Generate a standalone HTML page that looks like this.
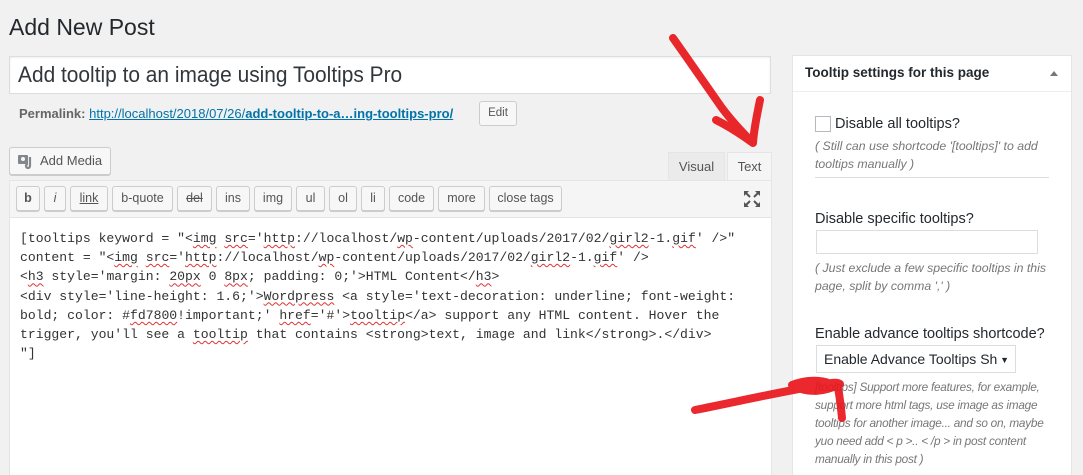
<!DOCTYPE html>
<html style="width:1083px;height:475px;overflow:hidden"><head><meta charset="utf-8"><style>
*{box-sizing:border-box;margin:0;padding:0}
body{width:1083px;height:475px;background:#f1f1f1;font-family:"Liberation Sans",sans-serif;color:#23282d;position:relative;overflow:hidden}
.a{position:absolute}
.btn{position:absolute;top:186px;height:25px;border:1px solid #ccc;background:#f7f7f7;border-radius:3px;box-shadow:0 1px 0 #ccc;font-size:12.5px;color:#555;text-align:center;line-height:23px}
.code{font-family:"Liberation Mono",monospace;font-size:13.1px;color:#333;line-height:19.2px;white-space:pre}
.sq{text-decoration:underline wavy #d33;text-decoration-thickness:1px;text-underline-offset:2px}
.note{font-style:italic;color:#777;font-size:12.3px;line-height:18px}
.lbl{font-size:14.5px;color:#23282d}
</style></head><body>
<div class="a" style="left:9px;top:14px;font-size:23px;color:#23282d">Add New Post</div>
<div class="a" style="left:9px;top:56px;width:762px;height:38px;background:#fff;border:1px solid #ddd;box-shadow:inset 0 1px 2px rgba(0,0,0,.07)"></div>
<div class="a" style="left:18px;top:62px;font-size:22px;color:#32373c;transform:scaleX(.95);transform-origin:left">Add tooltip to an image using Tooltips Pro</div>
<div class="a" style="left:19px;top:106px;font-size:13px;color:#666;white-space:nowrap"><b>Permalink:</b> <span style="color:#0073aa;text-decoration:underline">http://localhost/2018/07/26/<b>add-tooltip-to-a…ing-tooltips-pro/</b></span></div>
<div class="a" style="left:479px;top:101px;width:38px;height:25px;border:1px solid #ccc;background:#f7f7f7;border-radius:3px;font-size:11.5px;color:#555;text-align:center;line-height:23px">Edit</div>
<div class="a" style="left:9px;top:147px;width:102px;height:28px;border:1px solid #ccc;background:#f7f7f7;border-radius:3px;box-shadow:0 1px 0 #ccc;font-size:13px;color:#555;line-height:26px;padding-left:30px">Add Media</div>
<svg class="a" style="left:17px;top:153px" width="18" height="17" viewBox="0 0 18 17"><rect x="1" y="2" width="10" height="9" rx="1" fill="#82878c"/><circle cx="6" cy="6" r="2" fill="#f7f7f7"/><path d="M13 4v9a2 2 0 1 1-2-2" stroke="#82878c" stroke-width="2.2" fill="none"/></svg>
<div class="a" style="left:668px;top:152px;width:57px;height:29px;background:#ebebeb;border:1px solid #e5e5e5;border-bottom:none;font-size:13px;color:#555;text-align:center;line-height:28px">Visual</div>
<div class="a" style="left:727px;top:152px;width:45px;height:30px;background:#f5f5f5;border:1px solid #e5e5e5;border-bottom:none;font-size:13px;color:#555;text-align:center;line-height:28px">Text</div>
<div class="a" style="left:9px;top:180px;width:763px;height:38px;background:#f5f5f5;border:1px solid #e5e5e5"></div>
<div class="btn" style="left:16px;width:24px;font-weight:bold">b</div>
<div class="btn" style="left:44px;width:22px;font-style:italic">i</div>
<div class="btn" style="left:70px;width:38px;text-decoration:underline">link</div>
<div class="btn" style="left:112px;width:61px">b-quote</div>
<div class="btn" style="left:177px;width:35px;text-decoration:line-through">del</div>
<div class="btn" style="left:216px;width:34px">ins</div>
<div class="btn" style="left:254px;width:38px">img</div>
<div class="btn" style="left:296px;width:29px">ul</div>
<div class="btn" style="left:329px;width:28px">ol</div>
<div class="btn" style="left:361px;width:24px">li</div>
<div class="btn" style="left:389px;width:45px">code</div>
<div class="btn" style="left:438px;width:47px">more</div>
<div class="btn" style="left:489px;width:73px">close tags</div>
<svg class="a" style="left:743px;top:190px" width="18" height="18" viewBox="0 0 18 18" fill="#555"><path d="M1 1h5L1 6zM17 1h-5l5 5zM1 17h5l-5-5zM17 17h-5l5-5z"/><path d="M3 3l4 4M15 3l-4 4M3 15l4-4M15 15l-4-4" stroke="#555" stroke-width="2"/></svg>
<div class="a" style="left:9px;top:217px;width:763px;height:270px;background:#fff;border:1px solid #e5e5e5"></div>
<div class="a code" style="left:20px;top:229px">[tooltips keyword = "&lt;<span class="sq">img</span> <span class="sq">src</span>='<span class="sq">http</span>://localhost/<span class="sq">wp</span>-content/uploads/2017/02/<span class="sq">girl2</span>-1.<span class="sq">gif</span>' /&gt;"
content = "&lt;<span class="sq">img</span> <span class="sq">src</span>='<span class="sq">http</span>://localhost/<span class="sq">wp</span>-content/uploads/2017/02/<span class="sq">girl2</span>-1.<span class="sq">gif</span>' /&gt;
&lt;<span class="sq">h3</span> style='margin: <span class="sq">20px</span> 0 <span class="sq">8px</span>; padding: 0;'&gt;HTML Content&lt;/<span class="sq">h3</span>&gt;
&lt;div style='line-height: 1.6;'&gt;<span class="sq">Wordpress</span> &lt;a style='text-decoration: underline; font-weight:
bold; color: #<span class="sq">fd7800</span>!important;' <span class="sq">href</span>='#'&gt;<span class="sq">tooltip</span>&lt;/a&gt; support any HTML content. Hover the
trigger, you'll see a <span class="sq">tooltip</span> that contains &lt;strong&gt;text, image and link&lt;/strong&gt;.&lt;/div&gt;
"]</div>

<div class="a" style="left:792px;top:55px;width:280px;height:440px;background:#fff;border:1px solid #e5e5e5"></div>
<div class="a" style="left:793px;top:91px;width:278px;height:1px;background:#eee"></div>
<div class="a" style="left:805px;top:65px;font-size:13.5px;font-weight:bold;color:#23282d">Tooltip settings for this page</div>
<div class="a" style="left:1050px;top:71px;width:0;height:0;border-left:4px solid transparent;border-right:4px solid transparent;border-bottom:5px solid #72777c"></div>
<div class="a" style="left:815px;top:116px;width:16px;height:16px;border:1px solid #b4b9be;background:#fff"></div>
<div class="a lbl" style="left:835px;top:116px">Disable all tooltips?</div>
<div class="a note" style="left:815px;top:137px;width:240px">( Still can use shortcode '[tooltips]' to add tooltips manually )</div>
<div class="a" style="left:815px;top:177px;width:234px;height:1px;background:#ddd"></div>
<div class="a lbl" style="left:815px;top:211px">Disable specific tooltips?</div>
<div class="a" style="left:816px;top:230px;width:222px;height:24px;border:1px solid #ddd;background:#fff"></div>
<div class="a note" style="left:815px;top:259px;width:245px">( Just exclude a few specific tooltips in this page, split by comma ',' )</div>
<div class="a lbl" style="left:815px;top:326px">Enable advance tooltips shortcode?</div>
<div class="a" style="left:816px;top:345px;width:200px;height:28px;border:1px solid #ddd;background:#fff;font-size:14px;line-height:26px;padding-left:7px;white-space:nowrap;overflow:hidden">Enable Advance Tooltips Sh<span style="position:absolute;right:6px;top:1px;font-size:9px">▼</span></div>
<div class="a note" style="left:815px;top:378px;width:242px;font-size:11.8px;letter-spacing:-.25px">[tooltips] Support more features, for example, support more html tags, use image as image tooltips for another image... and so on, maybe yuo need add &lt; p &gt;.. &lt; /p &gt; in post content manually in this post )</div>

<svg class="a" style="left:0;top:0" width="1083" height="475">
<g stroke="#e8161b" fill="none" stroke-linecap="round" stroke-linejoin="round" opacity=".92">
<path d="M673 38 C690 62 708 88 722 108 C734 124 744 134 752 142" stroke-width="8"/>
<path d="M760 100 C757 115 754 128 753 143 C742 135 728 126 716 120" stroke-width="8"/>
<path d="M695 410 C735 402 775 393 815 386 C828 384 836 381 840 384 C825 392 808 394 792 385 C810 378 828 380 838 388 C840 398 841 408 842 418" stroke-width="8"/>
</g>
</svg>
</body></html>
